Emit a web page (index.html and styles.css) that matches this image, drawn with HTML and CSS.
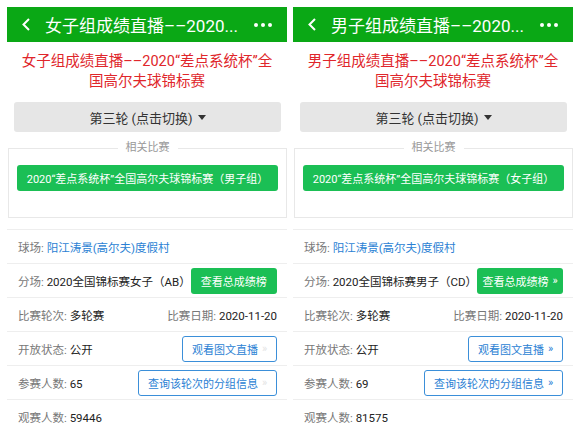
FILE: index.html
```html
<!DOCTYPE html>
<html lang="zh-CN">
<head>
<meta charset="utf-8">
<title>成绩直播</title>
<link rel="stylesheet" href="styles.css">
</head>
<body>
<div class="page">
  <section class="phone">
    <header class="nav">
      <svg class="back" viewBox="0 0 8 13"><polyline points="7,1 1.5,6.5 7,12" /></svg>
      <div class="nav-title">女子组成绩直播––2020...</div>
      <svg class="more" viewBox="0 0 18 4"><circle cx="2" cy="2" r="2"/><circle cx="9" cy="2" r="2"/><circle cx="16" cy="2" r="2"/></svg>
    </header>
    <h1 class="title">女子组成绩直播––2020“差点系统杯”全国高尔夫球锦标赛</h1>
    <div class="round">第三轮 (点击切换)<span class="caret"></span></div>
    <fieldset class="related">
      <legend>相关比赛</legend>
      <div class="btn btn-fill wide">2020“差点系统杯”全国高尔夫球锦标赛（男子组）</div>
    </fieldset>
    <ul class="info">
      <li class="row"><span><span class="lbl">球场:</span> <span class="link">阳江涛景(高尔夫)度假村</span></span></li>
      <li class="row"><span><span class="lbl">分场:</span> 2020全国锦标赛女子（AB）</span><span class="btn btn-fill short">查看总成绩榜</span></li>
      <li class="row"><span><span class="lbl">比赛轮次:</span> 多轮赛</span><span><span class="lbl">比赛日期:</span> 2020-11-20</span></li>
      <li class="row"><span><span class="lbl">开放状态:</span> 公开</span><span class="btn btn-line short">观看图文直播<span class="raquo faint">»</span></span></li>
      <li class="row"><span><span class="lbl">参赛人数:</span> 65</span><span class="btn btn-line long">查询该轮次的分组信息<span class="raquo faint">»</span></span></li>
      <li class="row"><span><span class="lbl">观赛人数:</span> 59446</span></li>
    </ul>
  </section>
  <section class="phone">
    <header class="nav">
      <svg class="back" viewBox="0 0 8 13"><polyline points="7,1 1.5,6.5 7,12" /></svg>
      <div class="nav-title">男子组成绩直播––2020...</div>
      <svg class="more" viewBox="0 0 18 4"><circle cx="2" cy="2" r="2"/><circle cx="9" cy="2" r="2"/><circle cx="16" cy="2" r="2"/></svg>
    </header>
    <h1 class="title">男子组成绩直播––2020“差点系统杯”全国高尔夫球锦标赛</h1>
    <div class="round">第三轮 (点击切换)<span class="caret"></span></div>
    <fieldset class="related">
      <legend>相关比赛</legend>
      <div class="btn btn-fill wide">2020“差点系统杯”全国高尔夫球锦标赛（女子组）</div>
    </fieldset>
    <ul class="info">
      <li class="row"><span><span class="lbl">球场:</span> <span class="link">阳江涛景(高尔夫)度假村</span></span></li>
      <li class="row"><span><span class="lbl">分场:</span> 2020全国锦标赛男子（CD）</span><span class="btn btn-fill short">查看总成绩榜<span class="raquo">»</span></span></li>
      <li class="row"><span><span class="lbl">比赛轮次:</span> 多轮赛</span><span><span class="lbl">比赛日期:</span> 2020-11-20</span></li>
      <li class="row"><span><span class="lbl">开放状态:</span> 公开</span><span class="btn btn-line short">观看图文直播<span class="raquo">»</span></span></li>
      <li class="row"><span><span class="lbl">参赛人数:</span> 69</span><span class="btn btn-line long">查询该轮次的分组信息<span class="raquo">»</span></span></li>
      <li class="row"><span><span class="lbl">观赛人数:</span> 81575</span></li>
    </ul>
  </section>
</div>
</body>
</html>
```

FILE: styles.css
```css
html, body {
  margin: 0;
  background: #fff;
  font-family: Roboto, "Noto Sans CJK SC", sans-serif;
}

.page {
  display: flex;
  gap: 6px;
  padding: 7px 7px 0;
}

.phone {
  width: 280px;
  flex: none;
}

.nav {
  height: 35px;
  background: #0aa815;
  color: #fff;
  display: flex;
  align-items: center;
  padding: 0 15px;
}

.back {
  width: 8px;
  height: 13px;
  margin-right: 15px;
  flex: none;
}

.back polyline {
  fill: none;
  stroke: #fff;
  stroke-width: 2;
}

.nav-title {
  flex: 1;
  font-size: 17px;
  white-space: nowrap;
  overflow: hidden;
}

.more {
  width: 18px;
  height: 4px;
  flex: none;
  fill: #fff;
}

.title {
  margin: 0;
  padding: 10px 12px 4px;
  font-size: 14.5px;
  line-height: 20px;
  font-weight: normal;
  color: #e0262b;
  text-align: center;
}

.round {
  margin: 6px 6px 0 7px;
  height: 30px;
  background: #e6e6e6;
  border-radius: 3px;
  display: flex;
  align-items: center;
  justify-content: center;
  font-size: 13px;
  color: #333;
}

.caret {
  width: 0;
  height: 0;
  margin-left: 5px;
  border-left: 4px solid transparent;
  border-right: 4px solid transparent;
  border-top: 5px solid #333;
}

.related {
  margin: 9px 0 0 1px;
  padding: 0 8px 26px;
  border: 1px solid #e8e8e8;
  min-width: 0;
}

.related legend {
  margin: 0 auto;
  padding: 0 8px;
  font-size: 11px;
  line-height: 14px;
  color: #999;
}

.btn {
  box-sizing: border-box;
  height: 26px;
  border-radius: 3px;
  display: flex;
  align-items: center;
  justify-content: center;
  font-size: 11px;
  white-space: nowrap;
}

.btn-fill {
  background: #1bbf55;
  color: #fff;
}

.btn-line {
  background: #fff;
  border: 1px solid #3b8fd9;
  color: #2b7fd4;
}

.wide {
  margin-top: 10px;
}

.short {
  width: 95px;
}

.long {
  width: 139px;
}

.raquo {
  margin-left: 4px;
}

.faint {
  color: #e4e4e4;
}

.info {
  list-style: none;
  margin: 11px 0 0;
  padding: 0;
}

.row {
  box-sizing: border-box;
  height: 34px;
  border-top: 1px solid #eee;
  padding: 0 10px 0 11px;
  display: flex;
  align-items: center;
  justify-content: space-between;
  font-size: 11.5px;
  color: #222;
  white-space: nowrap;
}

.lbl {
  color: #777;
}

.link {
  color: #2b7fd4;
}
```
